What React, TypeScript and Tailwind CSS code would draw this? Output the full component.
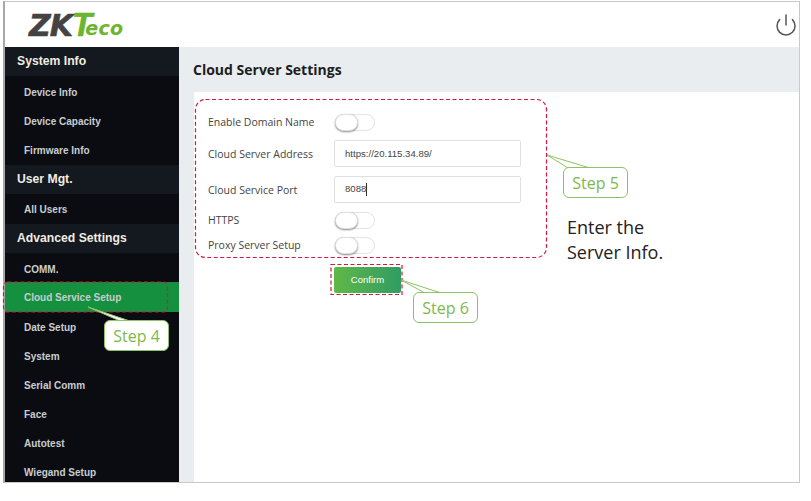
import { Power } from 'lucide-react';

const sections = [
  { title: 'System Info', items: ['Device Info', 'Device Capacity', 'Firmware Info'] },
  { title: 'User Mgt.', items: ['All Users'] },
  {
    title: 'Advanced Settings',
    items: ['COMM.', 'Cloud Service Setup', 'Date Setup', 'System', 'Serial Comm', 'Face', 'Autotest', 'Wiegand Setup'],
  },
];

function Toggle() {
  return (
    <div className="relative h-[17px] w-[40px] rounded-full border border-[#e2e2e2] bg-white">
      <div className="absolute -left-px -top-px h-[17px] w-[23px] rounded-full border border-[#ddd] bg-white shadow-[0_1px_2px_rgba(0,0,0,0.45)]" />
    </div>
  );
}

function Step({ label, className }: { label: string; className: string }) {
  return (
    <div
      className={`absolute flex h-[31px] w-[65px] items-center justify-center rounded-[6px] border border-[#8dc265] bg-white font-['Open_Sans',sans-serif] text-[16px] text-[#7db84e] ${className}`}
    >
      {label}
    </div>
  );
}

export default function App() {
  return (
    <div className="relative h-[501px] w-[811px] overflow-hidden bg-white">
      <div className="ml-[3px] mt-px flex h-[482px] w-[797px] flex-col border border-l-2 border-[#c9c9c9] border-l-[#a8a8a8] bg-white">
        <header className="flex h-[45px] shrink-0 items-center justify-between pl-[24px] pr-px">
          <div className="flex items-end font-['DejaVu_Sans',sans-serif] italic leading-none">
            <span className="text-[30px] font-bold tracking-[-1px] text-[#434343] [-webkit-text-stroke:0.6px_#434343]">ZK</span>
            <span className="font-['Liberation_Sans',sans-serif] text-[33px] font-bold text-[#6cb52d] [-webkit-text-stroke:0.6px_#6cb52d]">T</span>
            <span className="mb-[3px] ml-[-7px] text-[19px] font-bold tracking-[0.4px] text-[#6cb52d]">eco</span>
          </div>
          <Power size={24} strokeWidth={1.5} className="text-[#555]" />
        </header>

        <div className="flex min-h-0 flex-1">
          <aside className="w-[174px] shrink-0 overflow-hidden bg-[#0a0c12] font-['Liberation_Sans',sans-serif]">
            {sections.map((s) => (
              <div key={s.title}>
                <div className="flex h-[29px] items-center bg-[#14181f] pl-[12px] text-[12.2px] font-bold text-[#f0ece2]">
                  {s.title}
                </div>
                <ul className="pt-[1.5px]">
                  {s.items.map((item) => (
                    <li
                      key={item}
                      className={`flex items-center pl-[19px] text-[10px] font-bold text-[#c9ccce] ${
                        item === 'Cloud Service Setup' ? 'mb-px mt-[-2px] h-[30px] bg-[#14903f] pt-[2px]' : 'h-[29px]'
                      }`}
                    >
                      {item}
                    </li>
                  ))}
                </ul>
              </div>
            ))}
          </aside>

          <main className="flex min-w-0 flex-1 flex-col bg-[#e9edef]">
            <h1 className="flex h-[45px] shrink-0 items-center pl-[14px] font-['Open_Sans',sans-serif] text-[14px] font-bold text-[#1d1d1d]">
              Cloud Server Settings
            </h1>
            <section className="ml-[15px] flex-1 bg-white pl-[14px] pt-[21px] font-['Open_Sans',sans-serif] text-[10.5px] text-[#444]">
              <div className="flex h-[18px] items-center">
                <label className="w-[127px] pt-[2px]">Enable Domain Name</label>
                <Toggle />
              </div>
              <div className="mt-[9px] flex items-center">
                <label className="w-[126px] pt-[2px]">Cloud Server Address</label>
                <input
                  readOnly
                  value="https://20.115.34.89/"
                  className="h-[27px] w-[187px] rounded-[2px] border border-[#e0e0e0] pl-[10px] font-['Liberation_Sans',sans-serif] text-[9.6px] text-[#444]"
                />
              </div>
              <div className="mt-[9px] flex items-center">
                <label className="w-[126px] pt-[2px]">Cloud Service Port</label>
                <div className="flex h-[27px] w-[187px] items-center rounded-[2px] border border-[#e0e0e0] pl-[10px] font-['Liberation_Sans',sans-serif] text-[9.6px] text-[#444]">
                  8088
                  <span className="h-[13px] w-px bg-[#333]" />
                </div>
              </div>
              <div className="mt-[8px] flex h-[18px] items-center">
                <label className="w-[127px] pt-[2px]">HTTPS</label>
                <Toggle />
              </div>
              <div className="mt-[7px] flex h-[18px] items-center">
                <label className="w-[127px] pt-[2px]">Proxy Server Setup</label>
                <Toggle />
              </div>
              <button className="ml-[126px] mt-[13px] block h-[26px] w-[67px] rounded-[2px] bg-gradient-to-r from-[#5fb845] to-[#2f9c62] font-['Liberation_Sans',sans-serif] text-[9.5px] text-white">
                Confirm
              </button>
            </section>
          </main>
        </div>
      </div>

      {/* annotations on top of the screenshot */}
      <svg className="absolute left-0 top-0" width="811" height="501" fill="none">
        <g stroke="#d4173f" strokeWidth="1.2" strokeDasharray="4 2.5">
          <rect x="195.5" y="99.5" width="351" height="158" rx="10" />
          <rect x="331" y="264.5" width="71" height="30" />
          <rect x="3.5" y="282" width="164" height="30" rx="4" />
        </g>
        <path d="M88 307 L120 321 L130 321 Z" fill="#fff" stroke="#8dc265" />
        <path d="M547 155 L568 168 L590 168 Z" fill="#fff" stroke="#8dc265" />
        <path d="M401 280 L425 293 L441 293 Z" fill="#fff" stroke="#8dc265" />
      </svg>

      <Step label="Step 4" className="left-[104px] top-[320px]" />
      <Step label="Step 5" className="left-[563px] top-[167px]" />
      <Step label="Step 6" className="left-[413px] top-[292px]" />

      <p className="absolute left-[567px] top-[215px] font-['Open_Sans',sans-serif] text-[18px] leading-[25px] text-[#222]">
        Enter the
        <br />
        Server Info.
      </p>
    </div>
  );
}
